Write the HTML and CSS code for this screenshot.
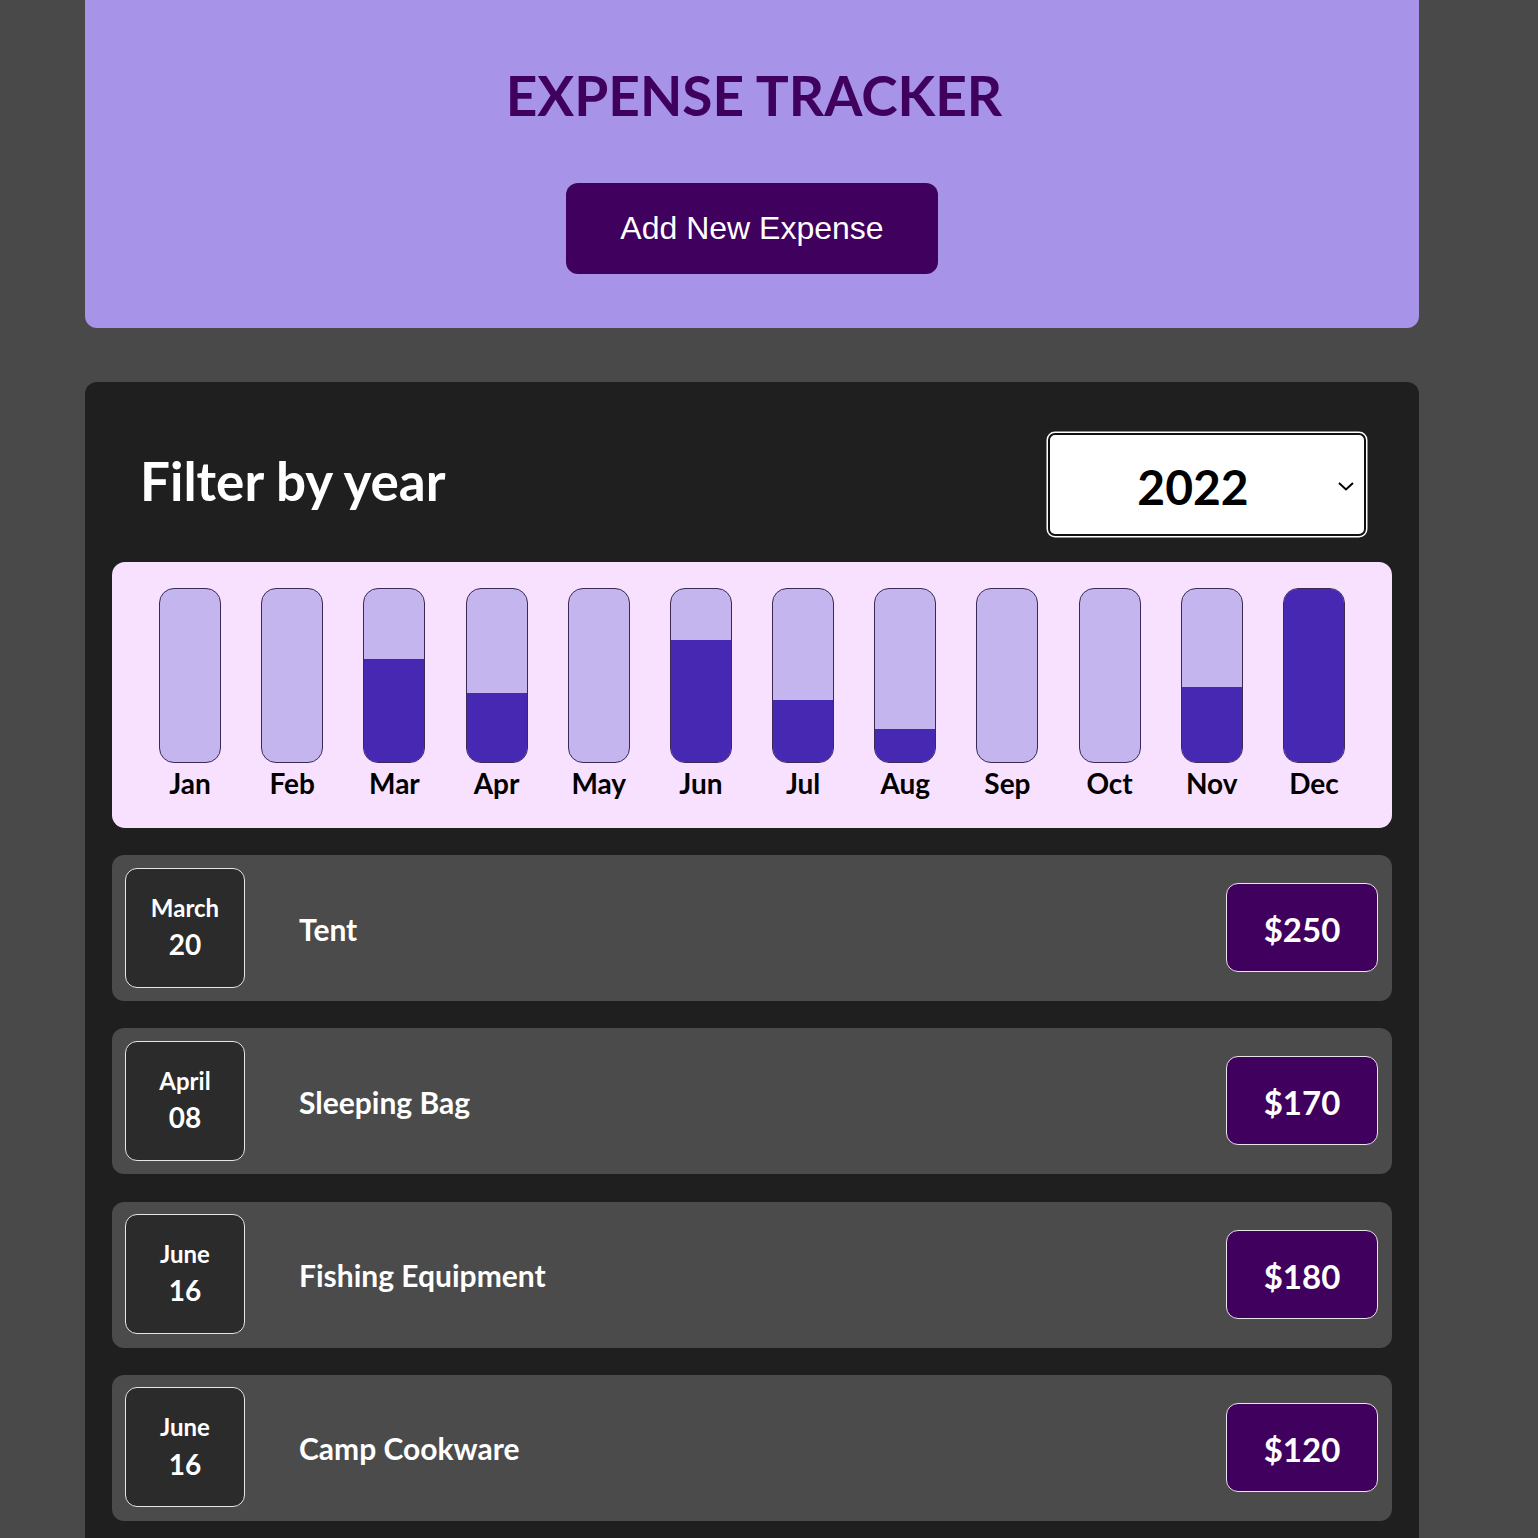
FILE: index.html
```html
<!DOCTYPE html>
<html>
<head>
<meta charset="utf-8">
<link rel="stylesheet" href="styles.css">
</head>
<body>
<div class="page">
  <header class="new-expense">
    <h1 class="title">EXPENSE TRACKER</h1>
    <button class="add-btn">Add New Expense</button>
  </header>

  <section class="expenses">
    <div class="filter">
      <span class="filter-label">Filter by year</span>
      <div class="select">
        <span class="select-value">2022</span>
        <svg class="chev" width="20" height="12" viewBox="0 0 20 12"><path d="M3 3 L10 9.5 L17 3" fill="none" stroke="#000" stroke-width="2"/></svg>
      </div>
    </div>

    <div class="chart">
      <div class="bar"><div class="bar-inner"><div class="bar-fill" style="height:0%"></div></div><div class="bar-label">Jan</div></div>
      <div class="bar"><div class="bar-inner"><div class="bar-fill" style="height:0%"></div></div><div class="bar-label">Feb</div></div>
      <div class="bar"><div class="bar-inner"><div class="bar-fill" style="height:59.8%"></div></div><div class="bar-label">Mar</div></div>
      <div class="bar"><div class="bar-inner"><div class="bar-fill" style="height:39.7%"></div></div><div class="bar-label">Apr</div></div>
      <div class="bar"><div class="bar-inner"><div class="bar-fill" style="height:0%"></div></div><div class="bar-label">May</div></div>
      <div class="bar"><div class="bar-inner"><div class="bar-fill" style="height:70.7%"></div></div><div class="bar-label">Jun</div></div>
      <div class="bar"><div class="bar-inner"><div class="bar-fill" style="height:35.6%"></div></div><div class="bar-label">Jul</div></div>
      <div class="bar"><div class="bar-inner"><div class="bar-fill" style="height:19%"></div></div><div class="bar-label">Aug</div></div>
      <div class="bar"><div class="bar-inner"><div class="bar-fill" style="height:0%"></div></div><div class="bar-label">Sep</div></div>
      <div class="bar"><div class="bar-inner"><div class="bar-fill" style="height:0%"></div></div><div class="bar-label">Oct</div></div>
      <div class="bar"><div class="bar-inner"><div class="bar-fill" style="height:43.1%"></div></div><div class="bar-label">Nov</div></div>
      <div class="bar"><div class="bar-inner"><div class="bar-fill" style="height:100%"></div></div><div class="bar-label">Dec</div></div>
    </div>

    <ul class="list">
      <li class="item">
        <div class="date"><span class="month">March</span><span class="day">20</span></div>
        <h2 class="desc">Tent</h2>
        <div class="price">$250</div>
      </li>
      <li class="item">
        <div class="date"><span class="month">April</span><span class="day">08</span></div>
        <h2 class="desc">Sleeping Bag</h2>
        <div class="price">$170</div>
      </li>
      <li class="item">
        <div class="date"><span class="month">June</span><span class="day">16</span></div>
        <h2 class="desc">Fishing Equipment</h2>
        <div class="price">$180</div>
      </li>
      <li class="item">
        <div class="date"><span class="month">June</span><span class="day">16</span></div>
        <h2 class="desc">Camp Cookware</h2>
        <div class="price">$120</div>
      </li>
    </ul>
  </section>
</div>
</body>
</html>
```

FILE: styles.css
```css
* { box-sizing: border-box; }
html, body { margin: 0; padding: 0; }
body {
  background: #494949;
  font-family: "Lato", "Noto Sans", sans-serif;
  min-height: 1538px;
}
.page {
  width: 1334px;
  margin-left: 85px;
}
.new-expense {
  background: #a794e8;
  border-radius: 0 0 12px 12px;
  height: 328px;
  display: flex;
  flex-direction: column;
  align-items: center;
  padding-top: 62px;
}
.title {
  margin: 0;
  color: #40005d;
  font-weight: 700;
  font-size: 55px;
  line-height: 66px;
  letter-spacing: 0;
  padding-left: 4px;
}
.add-btn {
  margin-top: 55px;
  width: 372px;
  height: 91px;
  border: none;
  border-radius: 12px;
  background: #40005d;
  color: #fff;
  font-family: "Liberation Sans", Arial, sans-serif;
  font-size: 32px;
}
.expenses {
  margin-top: 54px;
  background: #1f1f1f;
  border-radius: 12px;
  padding: 27px;
  min-height: 1200px;
}
.filter {
  display: flex;
  justify-content: space-between;
  align-items: center;
  padding: 24px 26px 0 28px;
}
.filter-label {
  color: #fff;
  font-weight: 700;
  font-size: 53px;
  margin-top: -8px;
}
.select {
  width: 318px;
  height: 103px;
  background: #fff;
  border: 2px solid #111;
  box-shadow: 0 0 0 1.5px #fff;
  border-radius: 7px;
  display: flex;
  align-items: center;
  position: relative;
}
.select-value {
  flex: 1;
  text-align: center;
  font-weight: 700;
  font-size: 48px;
  color: #000;
  padding-top: 4px;
}
.chev {
  margin-right: 8px;
  margin-top: 2px;
}
.chart {
  margin-top: 26px;
  background: #f7e1fe;
  border-radius: 13px;
  height: 266px;
  padding: 26px 27px 0;
  display: grid;
  grid-template-columns: repeat(12, 1fr);
}
.bar {
  display: flex;
  flex-direction: column;
  align-items: center;
}
.bar-inner {
  width: 62px;
  height: 175px;
  border: 1px solid #3a2a55;
  border-radius: 15px;
  background: #c4b5ef;
  overflow: hidden;
  display: flex;
  flex-direction: column;
  justify-content: flex-end;
}
.bar-fill {
  background: #4628b2;
  width: 100%;
}
.bar-label {
  font-weight: 700;
  font-size: 28px;
  color: #000;
  margin-top: 3px;
}
.list {
  list-style: none;
  margin: 27px 0 0;
  padding: 0;
  display: flex;
  flex-direction: column;
  gap: 27.3px;
}
.item {
  background: #4b4b4b;
  border-radius: 12px;
  height: 146px;
  padding: 13px 14px 14px 13px;
  display: flex;
  align-items: center;
}
.date {
  width: 120px;
  height: 120px;
  background: #2b2b2b;
  border: 1px solid #e6e6e6;
  border-radius: 12px;
  color: #fff;
  display: flex;
  flex-direction: column;
  align-items: center;
  justify-content: center;
  font-weight: 700;
  line-height: 1.42;
}
.month { font-size: 24px; }
.day { font-size: 28px; }
.desc {
  flex: 1;
  margin: 0 0 0 54px;
  color: #fff;
  font-weight: 700;
  font-size: 30px;
  padding-top: 2px;
}
.price {
  width: 152px;
  height: 89px;
  background: #40005d;
  border: 1px solid #e6e6e6;
  border-radius: 12px;
  color: #fff;
  font-weight: 700;
  font-size: 33px;
  display: flex;
  align-items: center;
  justify-content: center;
  padding-top: 3px;
}
```
